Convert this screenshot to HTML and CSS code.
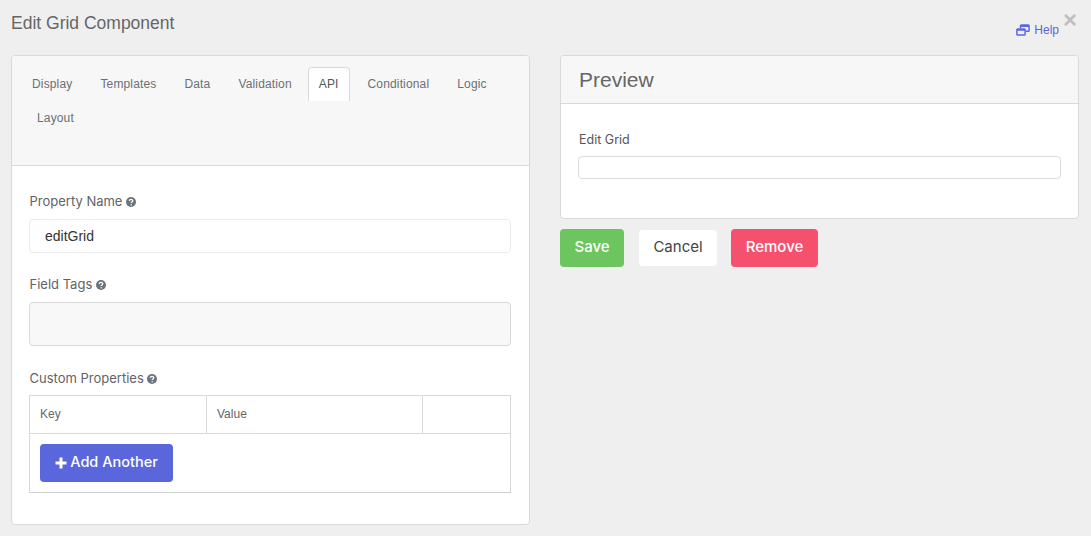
FILE: index.html
```html
<!DOCTYPE html>
<html lang="en">
<head>
<meta charset="utf-8">
<title>Edit Grid Component</title>
<link rel="stylesheet" href="styles.css">
</head>
<body>
<div class="dialog">
  <header class="head">
    <h1 class="title">Edit Grid Component</h1>
    <div class="head-right">
      <a class="help" href="#">
        <svg class="help-icon" viewBox="0 0 14 12" width="14" height="12" aria-hidden="true"><path class="hi-back" d="M4.500 4V1.700a.8.8 0 0 1 .8-.8h7a.8.8 0 0 1 .8.8v4.800a.8.8 0 0 1-.8.8H10"/><rect class="hi-front" x="0.900" y="4.900" width="8.200" height="6.200" rx="0.800"/><path class="hi-bar" d="M1 5.800h8M5 2h8"/></svg>
        <span>Help</span>
      </a>
      <span class="close">×</span>
    </div>
  </header>
  <div class="columns">
    <section class="card edit">
      <div class="tabs-head">
        <ul class="tabs">
          <li class="tab">Display</li>
          <li class="tab">Templates</li>
          <li class="tab">Data</li>
          <li class="tab">Validation</li>
          <li class="tab active">API</li>
          <li class="tab">Conditional</li>
          <li class="tab">Logic</li>
          <li class="tab">Layout</li>
        </ul>
      </div>
      <div class="edit-body">
        <div class="field field-name">
          <label class="label">Property Name <svg class="q" viewBox="0 0 10 10" width="10" height="10" aria-hidden="true"><circle cx="5" cy="5" r="5"/><path class="q-mark" d="M3.300 3.900c.1-1 .8-1.500 1.700-1.500s1.700.6 1.700 1.400c0 1.200-1.500 1.100-1.500 2.200"/><circle class="q-dot" cx="5.200" cy="7.700" r=".7"/></svg></label>
          <div class="input">editGrid</div>
        </div>
        <div class="field field-tags">
          <label class="label">Field Tags <svg class="q" viewBox="0 0 10 10" width="10" height="10" aria-hidden="true"><circle cx="5" cy="5" r="5"/><path class="q-mark" d="M3.300 3.900c.1-1 .8-1.500 1.700-1.500s1.700.6 1.700 1.400c0 1.200-1.500 1.100-1.500 2.200"/><circle class="q-dot" cx="5.200" cy="7.700" r=".7"/></svg></label>
          <div class="input tags"></div>
        </div>
        <div class="field">
          <label class="label">Custom Properties <svg class="q" viewBox="0 0 10 10" width="10" height="10" aria-hidden="true"><circle cx="5" cy="5" r="5"/><path class="q-mark" d="M3.300 3.900c.1-1 .8-1.500 1.700-1.500s1.700.6 1.700 1.400c0 1.200-1.500 1.100-1.500 2.200"/><circle class="q-dot" cx="5.200" cy="7.700" r=".7"/></svg></label>
          <table class="grid">
            <thead>
              <tr><th class="c-key">Key</th><th class="c-val">Value</th><th></th></tr>
            </thead>
            <tbody>
              <tr><td colspan="3" class="add-cell"><button class="btn add" type="button"><svg class="plus" viewBox="0 0 12 12" width="12" height="12" aria-hidden="true"><path d="M4.500 0.500h3v4h4v3h-4v4h-3v-4h-4v-3h4z"/></svg> Add Another</button></td></tr>
            </tbody>
          </table>
        </div>
      </div>
    </section>
    <div class="side">
      <section class="card preview">
        <div class="preview-head">Preview</div>
        <div class="preview-body">
          <label class="label dark">Edit Grid</label>
          <div class="mini-input"></div>
        </div>
      </section>
      <div class="actions">
        <button class="btn save" type="button">Save</button>
        <button class="btn cancel" type="button">Cancel</button>
        <button class="btn remove" type="button">Remove</button>
      </div>
    </div>
  </div>
</div>
</body>
</html>
```

FILE: styles.css
```css
* { box-sizing: border-box; }
html, body { margin: 0; height: 100%; }
body {
  background: #efefef;
  font-family: "Liberation Sans", Arial, sans-serif;
  overflow: hidden;
}
.dialog { padding: 0 12px 0 11px; }
.head {
  display: flex;
  justify-content: space-between;
  height: 55px;
}
.title {
  margin: 13px 0 0;
  font-size: 17.500px;
  line-height: 21px;
  font-weight: 400;
  color: #666;
}
.head-right { display: flex; align-items: flex-start; }
.help {
  display: flex;
  align-items: center;
  gap: 4px;
  margin-top: 23px;
  font-size: 12px;
  line-height: 14px;
  color: #5a67dc;
  text-decoration: none;
}
.help-icon { fill: none; stroke: #5a67dc; stroke-width: 1.500; }
.hi-bar { stroke-width: 1.800; }
.close {
  margin: 7px 2px 0 4px;
  font-size: 24px;
  line-height: 26px;
  font-weight: 700;
  color: #bfbfbf;
}
.columns {
  display: grid;
  grid-template-columns: 519px 519px;
  column-gap: 30px;
  align-items: start;
}
.card {
  background: #fff;
  border: 1px solid #d9d9d9;
  border-radius: 4px;
}
.edit { height: 470px; }
.tabs-head {
  height: 110px;
  background: #f7f7f7;
  border-bottom: 1px solid #d9d9d9;
  border-radius: 3px 3px 0 0;
  padding: 11px 0 0 6px;
}
.tabs {
  display: flex;
  flex-wrap: wrap;
  list-style: none;
  margin: 0;
  padding: 0;
}
.tab {
  height: 34px;
  padding: 9px 13px 0;
  font-size: 12px;
  line-height: 14px;
  letter-spacing: 0.150px;
  color: #6c6f76;
  border: 1px solid transparent;
  border-bottom: 0;
  border-radius: 4px 4px 0 0;
}
.tab:last-child { margin-left: 5px; }
.tab.active {
  background: #fff;
  border-color: #d9d9d9;
  color: #555;
  padding: 9px 10px 0;
  margin: 0 4px 0 2px;
}
.edit-body { padding: 26px 18px 0 17px; }
.field-name { margin-bottom: 22px; }
.field-tags { margin-bottom: 23px; }
.label {
  display: block;
  padding-left: 0.500px;
  font-family: Inter, "Noto Sans", sans-serif;
  font-size: 13px;
  line-height: 19px;
  color: #5f6368;
  margin-bottom: 8px;
}
.q { fill: #6c757d; vertical-align: -1px; }
.q-mark { fill: none; stroke: #fff; stroke-width: 1.300; }
.q-dot { fill: #fff; }
.input {
  height: 34px;
  padding: 0 15px;
  background: #fff;
  border: 1px solid #ebebeb;
  border-radius: 4px;
  font-size: 14px;
  line-height: 33px;
  color: #333;
}
.input.tags {
  height: 44px;
  background: #f8f8f8;
  border-color: #d9d9d9;
}
.grid {
  width: 100%;
  border-collapse: collapse;
  table-layout: fixed;
  margin-top: -1px;
  border: 1px solid #d9d9d9;
  border-bottom-color: #cfcfcf;
}
.grid th {
  height: 38px;
  padding: 0 10px 2px;
  border: 1px solid #d9d9d9;
  font-size: 12px;
  font-weight: 400;
  text-align: left;
  color: #666;
}
.c-key { width: 177px; }
.c-val { width: 216px; }
.add-cell { height: 59px; padding: 10px; vertical-align: top; }
.btn {
  display: inline-flex;
  align-items: center;
  justify-content: center;
  height: 38px;
  padding: 0 0 3px;
  border: 0;
  border-radius: 4px;
  font-family: Inter, "Noto Sans", sans-serif;
  font-size: 15px;
  font-weight: 500;
  color: #fff;
}
.add {
  width: 133px;
  padding-bottom: 4px;
  background: #5a67dc;
  gap: 3px;
  font-size: 14.500px;
}
.plus { fill: #fff; margin-top: 4px; }
.side { display: flex; flex-direction: column; }
.preview { height: 164px; }
.preview-head {
  height: 48px;
  padding: 0 18px;
  background: #f7f7f7;
  border-bottom: 1px solid #d9d9d9;
  border-radius: 3px 3px 0 0;
  font-size: 21px;
  line-height: 47px;
  color: #666;
}
.preview-body { padding: 26px 17px 0; }
.label.dark { color: #555; margin-bottom: 7px; padding-left: 1px; font-size: 12.500px; }
.mini-input {
  height: 23px;
  border: 1px solid #dcdcdc;
  border-radius: 4px;
  background: #fff;
}
.actions {
  display: flex;
  gap: 14px;
  margin-top: 10px;
}
.save { width: 64px; background: #6cc55f; }
.cancel {
  width: 80px;
  background: #fff;
  color: #444;
  font-weight: 400;
  border: 1px solid #eee;
}
.remove { width: 87px; background: #f5516f; margin-left: -1px; }
```
